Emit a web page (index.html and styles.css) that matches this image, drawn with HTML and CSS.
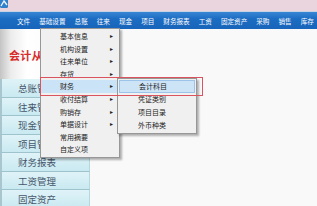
FILE: index.html
```html
<!DOCTYPE html>
<html lang="zh">
<head>
<meta charset="utf-8">
<link rel="stylesheet" href="styles.css">
</head>
<body>
<div class="titlebar">
  <svg class="appicon" width="9" height="10" viewBox="0 0 9 10"><rect x="0" y="0" width="8" height="9" rx="1.5" fill="#2f7fc9"/><path d="M1 7 L4 2 L7 6" stroke="#e8f3ff" stroke-width="1.4" fill="none"/></svg>
</div>
<nav class="menubar">
  <span>文件</span><span>基础设置</span><span>总账</span><span>往来</span><span>现金</span><span>项目</span><span>财务报表</span><span>工资</span><span>固定资产</span><span>采购</span><span>销售</span><span>库存</span>
</nav>
<div class="main">
  <aside class="side">
    <div class="banner">会计从业</div>
    <div class="btn">总账管理</div>
    <div class="btn">往来管理</div>
    <div class="btn">现金管理</div>
    <div class="btn">项目管理</div>
    <div class="btn">财务报表</div>
    <div class="btn">工资管理</div>
    <div class="btn">固定资产</div>
  </aside>
</div>
<ul class="menu">
  <li>基本信息<i>▸</i></li>
  <li>机构设置<i>▸</i></li>
  <li>往来单位<i>▸</i></li>
  <li>存货<i>▸</i></li>
  <li class="hot">财务<i>▸</i></li>
  <li>收付结算<i>▸</i></li>
  <li>购销存<i>▸</i></li>
  <li>单据设计<i>▸</i></li>
  <li>常用摘要</li>
  <li>自定义项</li>
</ul>
<ul class="submenu">
  <li class="hot">会计科目</li>
  <li>凭证类别</li>
  <li>项目目录</li>
  <li>外币种类</li>
</ul>
<div class="ring"></div>
</body>
</html>
```
FILE: styles.css
```css
* { box-sizing: border-box; }
html, body { margin: 0; padding: 0; }
body {
  width: 317px; height: 206px; overflow: hidden;
  background: #f9f9f9;
  font-family: "Noto Sans CJK SC", "Noto Sans", sans-serif;
  position: relative;
}
.titlebar {
  height: 12px;
  background: #ead5de;
  border-bottom: 1px solid #c7d3e2;
  display: flex; align-items: flex-start;
}
.appicon { display: block; margin-top: -1px; }
.menubar {
  height: 17px;
  background: linear-gradient(#3a86d6, #1b6cc2 40%, #1865bb);
  display: flex; align-items: center; gap: 9px;
  padding-left: 17px;
  font-size: 6.6px; color: #fff;
  white-space: nowrap;
}
.main { display: flex; }
.side { width: 90px; display: flex; flex-direction: column; }
.banner {
  height: 50px;
  background: linear-gradient(90deg, #c4c4c4 0%, #ececec 12%, #fff 30%, #f3f3f3 100%);
  color: #d82a2a; font-weight: 700; font-size: 11px;
  padding: 18px 0 0 9px;
  letter-spacing: 0.3px;
}
.btn {
  height: 18.5px;
  background: linear-gradient(#dff3f8, #c9e9f1);
  border-left: 2px solid #a9c6cf;
  border-bottom: 1px solid #9fc3cc;
  border-right: 1px solid #b7d7df;
  font-size: 9.5px; color: #47566a;
  padding: 3px 0 0 16px;
  line-height: 12px;
}
.menu, .submenu {
  list-style: none; margin: 0;
  position: absolute;
  background: #f0f0f0;
  border: 1px solid #979797;
  box-shadow: 2px 2px 2px rgba(0,0,0,0.3);
  font-size: 7px; color: #222;
}
.menu { left: 40px; top: 28px; width: 80px; padding: 1px 0; }
.menu li {
  height: 12.6px; line-height: 12.6px;
  padding-left: 19px; position: relative;
}
.menu li i {
  position: absolute; right: 6px; top: 0;
  font-style: normal; font-size: 6px;
}
.menu li.hot { background: #cbe3f6; }
.submenu { left: 117px; top: 78px; width: 80px; padding: 1px 1px; }
.submenu li {
  height: 13px; line-height: 13px; padding-left: 19px;
}
.submenu li.hot { background: #cde4f7; border: 1px solid #9cc4ea; line-height: 11px; }
.ring {
  position: absolute; left: 40px; top: 77px;
  width: 163px; height: 19px;
  border: 1.5px solid #d9545e;
}
```
